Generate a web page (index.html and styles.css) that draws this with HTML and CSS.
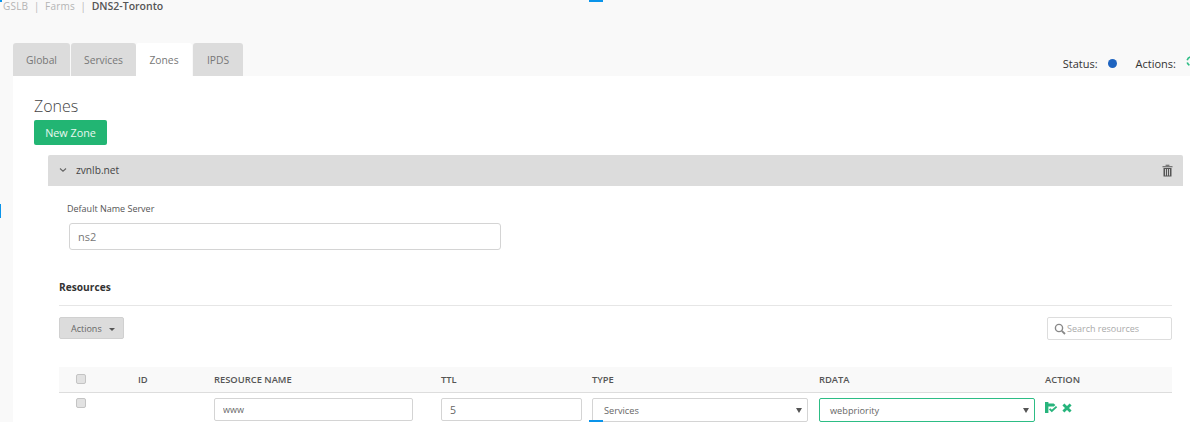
FILE: index.html
```html
<!DOCTYPE html>
<html lang="en">
<head>
<meta charset="utf-8">
<title>DNS2-Toronto</title>
<link rel="stylesheet" href="styles.css">
</head>
<body>
<span class="handle handle-tl"></span>
<span class="handle handle-tc"></span>
<span class="handle handle-ml"></span>
<span class="handle handle-bc"></span>
<header class="crumbs">
  <span class="crumb">GSLB</span><span class="sep">|</span><span class="crumb">Farms</span><span class="sep">|</span><strong class="crumb-now">DNS2-Toronto</strong>
</header>
<div class="topbar">
  <nav class="tabs">
    <a class="tab tab-global">Global</a>
    <a class="tab tab-services">Services</a>
    <a class="tab tab-zones active">Zones</a>
    <a class="tab tab-ipds">IPDS</a>
  </nav>
  <div class="status">
    <span class="status-label">Status:</span>
    <span class="dot"></span>
    <span class="status-label actions-label">Actions:</span>
    <svg class="spin" width="6" height="12" viewBox="0 0 6 12"><path d="M5.5 1 A4.5 4.5 0 0 0 1.2 4.2" fill="none" stroke="#2dbd85" stroke-width="1.7"/><path d="M1.2 6.6 A4.5 4.5 0 0 0 3.4 9.2" fill="none" stroke="#2dbd85" stroke-width="1.7"/></svg>
  </div>
</div>
<main class="panel">
  <h1 class="title">Zones</h1>
  <button class="btn-new">New Zone</button>
  <section class="zone">
    <div class="zone-head">
      <div class="zone-name">
        <svg width="8" height="6" viewBox="0 0 8 6"><path d="M1 1.5 L4 4.2 L7 1.5" fill="none" stroke="#666" stroke-width="1.1"/></svg>
        <span>zvnlb.net</span>
      </div>
      <svg class="trash" width="11" height="13" viewBox="0 0 11 13"><path d="M3.6 1.8 V0.8 H7.4 V1.8 M0.5 2.3 H10.5 V3.3 H0.5 Z M1.5 4 H9.5 V12.5 H1.5 Z" fill="#555"/><path d="M3.5 5 V11.5 M5.5 5 V11.5 M7.5 5 V11.5" stroke="#ddd" stroke-width="0.9"/></svg>
    </div>
  </section>
  <div class="ns">
    <label class="ns-label">Default Name Server</label>
    <input class="ns-input" value="ns2">
  </div>
  <h2 class="res-title">Resources</h2>
  <div class="toolbar">
    <button class="btn-actions">Actions <i class="caret"></i></button>
    <div class="search">
      <svg width="12" height="12" viewBox="0 0 12 12"><circle cx="5" cy="5" r="3.6" fill="none" stroke="#888" stroke-width="1.4"/><path d="M7.8 7.8 L11 11" stroke="#888" stroke-width="1.8"/></svg>
      <span>Search resources</span>
    </div>
  </div>
  <div class="grid grid-head">
    <span class="cell-check"><i class="check"></i></span>
    <span>ID</span>
    <span>RESOURCE NAME</span>
    <span>TTL</span>
    <span>TYPE</span>
    <span>RDATA</span>
    <span>ACTION</span>
  </div>
  <div class="grid grid-row">
    <span class="cell-check"><i class="check"></i></span>
    <span></span>
    <input class="field field-name" value="www">
    <input class="field field-ttl" value="5">
    <div class="select select-type">Services<i class="arrow"></i></div>
    <div class="select select-rdata">webpriority<i class="arrow"></i></div>
    <div class="row-actions">
      <svg width="13" height="11" viewBox="0 0 13 11"><path d="M0 0 H3.4 V1.6 H8.6 L10.4 3 L8.8 4.4 H3.4 V11 H0 Z" fill="#27b47c"/><path d="M4.6 6.8 L6.8 9 L11.6 4.6" fill="none" stroke="#27b47c" stroke-width="1.9"/></svg>
      <svg width="10" height="10" viewBox="0 0 10 10"><path d="M1.4 1.4 L8.6 8.6 M8.6 1.4 L1.4 8.6" stroke="#27b47c" stroke-width="2.8"/></svg>
    </div>
  </div>
</main>
</body>
</html>
```
FILE: styles.css
```css
* { box-sizing: border-box; }
html, body { margin: 0; height: 422px; overflow: hidden; }
body { background: #f9f9f9; font-family: "Open Sans", sans-serif; color: #555; font-size: 12px; position: relative; }
.handle { position: absolute; background: #0a94ea; }
.handle-tl { left: 0; top: 0; width: 2px; height: 2px; }
.handle-tc { left: 589px; top: 0; width: 14px; height: 2px; }
.handle-ml { left: 0; top: 204px; width: 1px; height: 14px; }
.handle-bc { left: 589px; top: 420px; width: 14px; height: 2px; z-index: 2; }
.crumbs { height: 43px; padding: 0 0 0 3px; display: flex; align-items: flex-start; font-size: 10.5px; line-height: 12px; }
.crumb { color: #b4b4b4; font-size: 10px; letter-spacing: 0.2px; }
.sep { color: #bbb; margin: 0 5.5px; }
.crumb-now { color: #555; font-weight: 600; }
.topbar { display: flex; justify-content: space-between; align-items: flex-end; height: 33px; padding-left: 13px; }
.tabs { display: flex; gap: 1px; height: 33px; }
.tab { background: #dcdcdc; color: #777; font-size: 10.3px; line-height: 35px; text-align: center; border-radius: 3px 3px 0 0; }
.tab-global { width: 57px; }
.tab-services { width: 65px; }
.tab-zones { width: 56px; background: #fff; margin-left: -1px; }
.tab-ipds { width: 50px; }
.status { display: flex; align-items: center; height: 28px; padding-top: 2px; margin-right: -2px; }
.status-label { font-size: 11px; color: #333; font-weight: 500; }
.dot { width: 9px; height: 9px; border-radius: 50%; background: #1e64c0; margin: 0 19px 0 10px; }
.actions-label { margin-right: 10px; }
.spin { display: block; margin-top: -3px; }
.panel { background: #fff; margin-left: 13px; height: 346px; padding: 20px 7px 0 21px; }
.title { margin: 0; font-size: 16px; font-weight: 300; line-height: 20px; color: #444; }
.btn-new { display: block; margin-top: 4px; width: 73px; height: 25px; background: #22b573; border: 0; border-radius: 2px; color: #e8f8f0; font: 10.8px "Open Sans", sans-serif; padding: 0; }
.zone { margin: 10px 0 0 14px; }
.zone-head { height: 31px; background: #dcdcdc; display: flex; justify-content: space-between; align-items: center; padding: 0 10px 2px 11px; border-radius: 2px 2px 0 0; }
.zone-name { display: flex; align-items: center; gap: 9px; font-size: 10.2px; color: #444; }
.trash { margin-top: 2px; }
.ns { padding: 0 0 0 33px; margin-top: 17px; }
.ns-label { display: block; font-size: 9px; line-height: 12px; color: #555; }
.ns-input { display: block; margin-top: 8px; margin-left: 2px; width: 432px; height: 27px; border: 1px solid #d4d4d4; border-radius: 3px; padding: 0 8px; font: 11px "Open Sans", sans-serif; color: #777; background: #fff; }
.res-title { margin: 30px 0 0 25px; font-size: 10.2px; font-weight: 700; line-height: 14px; color: #333; height: 25px; }
.toolbar { margin-left: 25px; border-top: 1px solid #e6e6e6; padding-top: 11px; display: flex; justify-content: space-between; height: 46px; width: 1113px; }
.btn-actions { width: 65px; height: 22px; background: #dcdcdc; border: 1px solid #d0d0d0; border-radius: 2px; font: 9px "Open Sans", sans-serif; color: #666; padding: 0 0 0 3px; }
.caret { display: inline-block; width: 0; height: 0; border: 3px solid transparent; border-top-color: #555; border-bottom: 0; margin-left: 5px; vertical-align: 1px; }
.search { width: 125px; height: 23px; border: 1px solid #ddd; border-radius: 2px; display: flex; align-items: center; gap: 1px; padding-left: 6px; font-size: 9px; color: #aaa; }
.grid { display: grid; grid-template-columns: 63px 76px 227px 151px 227px 226px 1fr; margin-left: 25px; width: 1113px; padding-left: 16px; }
.grid-head { height: 26px; background: #f9f9f9; border-bottom: 1px solid #ddd; margin-top: 16px; align-items: center; font-size: 9.4px; font-weight: 600; color: #555; }
.cell-check { display: flex; }
.check { display: block; width: 10px; height: 10px; background: #e2e2e2; border: 1px solid #c4c4c4; border-radius: 2px; margin: -2px 0 0 1px; }
.grid-row { height: 30px; padding-top: 5px; align-items: start; }
.grid-row .check { margin-top: 0; }
.field { width: 199px; height: 23px; border: 1px solid #d4d4d4; border-radius: 2px; padding: 0 8px; font: 9px "Open Sans", sans-serif; color: #666; background: #fff; }
.field-ttl { width: 141px; font-size: 10.5px; }
.select { position: relative; height: 24px; border: 1px solid #d4d4d4; border-radius: 2px; padding-left: 11px; font-size: 9.2px; line-height: 24px; color: #666; background: #fff; }
.select-type { width: 216px; }
.select-rdata { width: 216px; border-color: #2dbd85; padding-left: 10px; }
.arrow { position: absolute; right: 5px; top: 9px; width: 0; height: 0; border: 3px solid transparent; border-top: 5px solid #555; border-bottom: 0; }
.row-actions { display: flex; gap: 4px; padding-top: 4px; align-items: center; height: 15px; margin-top: 0; }
```
